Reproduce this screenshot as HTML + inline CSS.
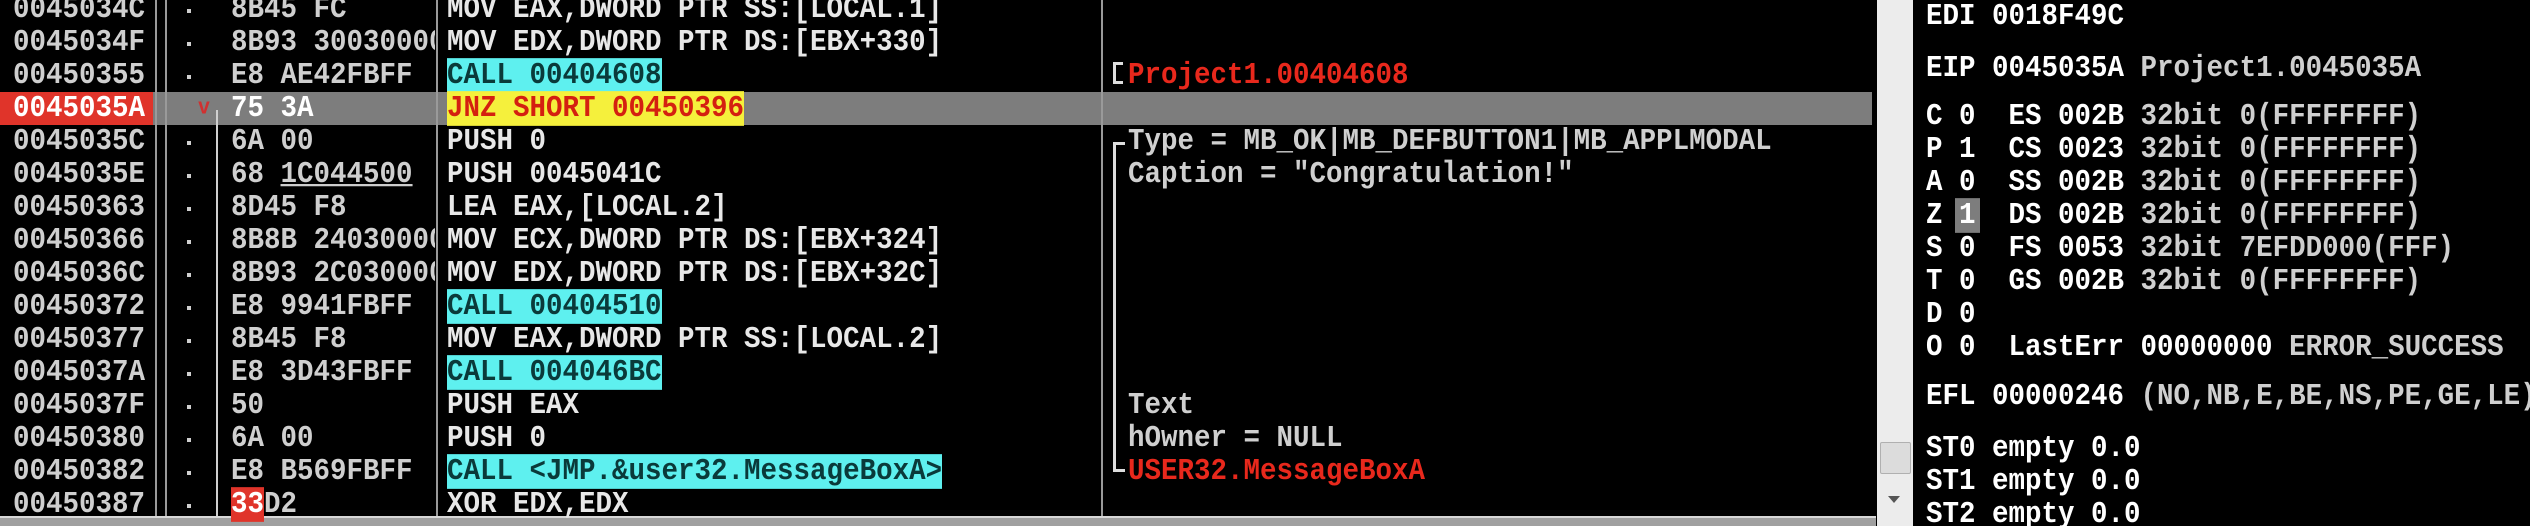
<!DOCTYPE html>
<html><head><meta charset="utf-8"><style>
html,body{margin:0;padding:0;background:#000;width:2530px;height:526px;overflow:hidden;position:relative}
body{font-family:"Liberation Mono",monospace;font-size:27.5px;color:#e8e8e8;font-weight:bold}
.t{position:absolute;white-space:pre;line-height:33px;height:33px;transform:scaleY(1.12);transform-origin:0 50%}
.a{color:#cfcfcf}
.v{position:absolute;background:#9a9a9a;width:2px}
.cy{background:#5ef0ef;color:#0a3a3a}
.ye{background:#f5f03c;color:#d42010}
.red{color:#e8281c}
.g{color:#cfcfcf}
.d{position:absolute;left:187px;width:4px;height:4px;background:#cfcfcf}
.clip{position:absolute;left:0;top:0;width:435px;height:526px;overflow:hidden}
</style></head><body>
<div style="position:absolute;left:0;top:92px;width:1872px;height:33px;background:#7d7d7d"></div>
<div style="position:absolute;left:0;top:92px;width:153px;height:33px;background:#e0342a"></div>
<div class="v" style="left:155px;top:0;height:517px"></div>
<div class="v" style="left:165px;top:0;height:517px"></div>
<div class="v" style="left:216px;top:110px;height:407px;background:#cfcfcf"></div>
<div class="v" style="left:436px;top:0;height:517px"></div>
<div class="v" style="left:1101px;top:0;height:517px"></div>
<!-- brackets -->
<div class="v" style="left:1113px;top:62px;height:22px;background:#ddd;width:3px"></div>
<div class="v" style="left:1113px;top:62px;height:3px;background:#ddd;width:10px"></div>
<div class="v" style="left:1113px;top:81px;height:3px;background:#ddd;width:10px"></div>
<div class="v" style="left:1113px;top:142px;height:330px;background:#ddd;width:3px"></div>
<div class="v" style="left:1113px;top:142px;height:3px;background:#ddd;width:12px"></div>
<div class="v" style="left:1113px;top:469px;height:3px;background:#ddd;width:12px"></div>
<div style="position:absolute;left:0;top:516px;width:1876px;height:10px;background:#a0a0a0;border-top:2px solid #d8d8d8"></div>
<div style="position:absolute;left:1877px;top:0;width:36px;height:526px;background:#ececec"></div>
<div style="position:absolute;left:1880px;top:442px;width:29px;height:30px;background:#dcdcdc;border:1px solid #b0b0b0;border-radius:2px"></div>
<div style="position:absolute;left:1888px;top:496px;width:0;height:0;border-left:6px solid transparent;border-right:6px solid transparent;border-top:7px solid #555"></div>

<div class="d" style="top:9px"></div><div class="d" style="top:42px"></div><div class="d" style="top:75px"></div>
<div class="d" style="top:141px"></div><div class="d" style="top:174px"></div><div class="d" style="top:207px"></div>
<div class="d" style="top:240px"></div><div class="d" style="top:273px"></div><div class="d" style="top:306px"></div>
<div class="d" style="top:339px"></div><div class="d" style="top:372px"></div><div class="d" style="top:405px"></div>
<div class="d" style="top:438px"></div><div class="d" style="top:471px"></div><div class="d" style="top:504px"></div>
<div class="t" style="left:198px;top:92px;color:#d03030;font-size:20px">v</div>

<div class="t a" style="left:13px;top:-7px">0045034C</div>
<div class="t a" style="left:13px;top:26px">0045034F</div>
<div class="t a" style="left:13px;top:59px">00450355</div>
<div class="t" style="left:13px;top:92px;color:#fff">0045035A</div>
<div class="t a" style="left:13px;top:125px">0045035C</div>
<div class="t a" style="left:13px;top:158px">0045035E</div>
<div class="t a" style="left:13px;top:191px">00450363</div>
<div class="t a" style="left:13px;top:224px">00450366</div>
<div class="t a" style="left:13px;top:257px">0045036C</div>
<div class="t a" style="left:13px;top:290px">00450372</div>
<div class="t a" style="left:13px;top:323px">00450377</div>
<div class="t a" style="left:13px;top:356px">0045037A</div>
<div class="t a" style="left:13px;top:389px">0045037F</div>
<div class="t a" style="left:13px;top:422px">00450380</div>
<div class="t a" style="left:13px;top:455px">00450382</div>
<div class="t a" style="left:13px;top:488px">00450387</div>
<div class="clip">
<div class="t a" style="left:231px;top:-7px">8B45 FC</div>
<div class="t a" style="left:231px;top:26px">8B93 30030000</div>
<div class="t a" style="left:231px;top:59px">E8 AE42FBFF</div>
<div class="t" style="left:231px;top:92px;color:#fff">75 3A</div>
<div class="t a" style="left:231px;top:125px">6A 00</div>
<div class="t a" style="left:231px;top:158px">68 <span style="text-decoration:underline">1C044500</span></div>
<div class="t a" style="left:231px;top:191px">8D45 F8</div>
<div class="t a" style="left:231px;top:224px">8B8B 24030000</div>
<div class="t a" style="left:231px;top:257px">8B93 2C030000</div>
<div class="t a" style="left:231px;top:290px">E8 9941FBFF</div>
<div class="t a" style="left:231px;top:323px">8B45 F8</div>
<div class="t a" style="left:231px;top:356px">E8 3D43FBFF</div>
<div class="t a" style="left:231px;top:389px">50</div>
<div class="t a" style="left:231px;top:422px">6A 00</div>
<div class="t a" style="left:231px;top:455px">E8 B569FBFF</div>
<div class="t a" style="left:231px;top:488px"><span style="background:#e0342a;color:#fff">33</span>D2</div>
</div>
<div class="t" style="left:447px;top:-7px">MOV EAX,DWORD PTR SS:[LOCAL.1]</div>
<div class="t" style="left:447px;top:26px">MOV EDX,DWORD PTR DS:[EBX+330]</div>
<div class="t" style="left:447px;top:59px"><span class="cy">CALL 00404608</span></div>
<div class="t" style="left:447px;top:92px"><span class="ye">JNZ SHORT 00450396</span></div>
<div class="t" style="left:447px;top:125px">PUSH 0</div>
<div class="t" style="left:447px;top:158px">PUSH 0045041C</div>
<div class="t" style="left:447px;top:191px">LEA EAX,[LOCAL.2]</div>
<div class="t" style="left:447px;top:224px">MOV ECX,DWORD PTR DS:[EBX+324]</div>
<div class="t" style="left:447px;top:257px">MOV EDX,DWORD PTR DS:[EBX+32C]</div>
<div class="t" style="left:447px;top:290px"><span class="cy">CALL 00404510</span></div>
<div class="t" style="left:447px;top:323px">MOV EAX,DWORD PTR SS:[LOCAL.2]</div>
<div class="t" style="left:447px;top:356px"><span class="cy">CALL 004046BC</span></div>
<div class="t" style="left:447px;top:389px">PUSH EAX</div>
<div class="t" style="left:447px;top:422px">PUSH 0</div>
<div class="t" style="left:447px;top:455px"><span class="cy">CALL &lt;JMP.&amp;user32.MessageBoxA&gt;</span></div>
<div class="t" style="left:447px;top:488px">XOR EDX,EDX</div>
<div class="t red" style="left:1128px;top:59px">Project1.00404608</div>
<div class="t g" style="left:1128px;top:125px">Type = MB_OK|MB_DEFBUTTON1|MB_APPLMODAL</div>
<div class="t g" style="left:1128px;top:158px">Caption = "Congratulation!"</div>
<div class="t g" style="left:1128px;top:389px">Text</div>
<div class="t g" style="left:1128px;top:422px">hOwner = NULL</div>
<div class="t red" style="left:1128px;top:455px">USER32.MessageBoxA</div>
<div class="t" style="left:1926px;top:0px;color:#fff">EDI 0018F49C</div>
<div class="t" style="left:1926px;top:52px;color:#fff">EIP 0045035A <span class="g">Project1.0045035A</span></div>
<div class="t" style="left:1926px;top:100px;color:#fff">C 0  ES 002B <span class="g">32bit 0(FFFFFFFF)</span></div>
<div class="t" style="left:1926px;top:133px;color:#fff">P 1  CS 0023 <span class="g">32bit 0(FFFFFFFF)</span></div>
<div class="t" style="left:1926px;top:166px;color:#fff">A 0  SS 002B <span class="g">32bit 0(FFFFFFFF)</span></div>
<div class="t" style="left:1926px;top:199px;color:#fff">Z <span style="background:#7d7d7d;padding:0 4px;margin:0 -4px">1</span>  DS 002B <span class="g">32bit 0(FFFFFFFF)</span></div>
<div class="t" style="left:1926px;top:232px;color:#fff">S 0  FS 0053 <span class="g">32bit 7EFDD000(FFF)</span></div>
<div class="t" style="left:1926px;top:265px;color:#fff">T 0  GS 002B <span class="g">32bit 0(FFFFFFFF)</span></div>
<div class="t" style="left:1926px;top:298px;color:#fff">D 0</div>
<div class="t" style="left:1926px;top:331px;color:#fff">O 0  LastErr 00000000 <span class="g">ERROR_SUCCESS</span></div>
<div class="t" style="left:1926px;top:380px;color:#fff">EFL 00000246 <span class="g">(NO,NB,E,BE,NS,PE,GE,LE)</span></div>
<div class="t" style="left:1926px;top:432px;color:#fff">ST0 empty 0.0</div>
<div class="t" style="left:1926px;top:465px;color:#fff">ST1 empty 0.0</div>
<div class="t" style="left:1926px;top:498px;color:#fff">ST2 empty 0.0</div>
</body></html>
